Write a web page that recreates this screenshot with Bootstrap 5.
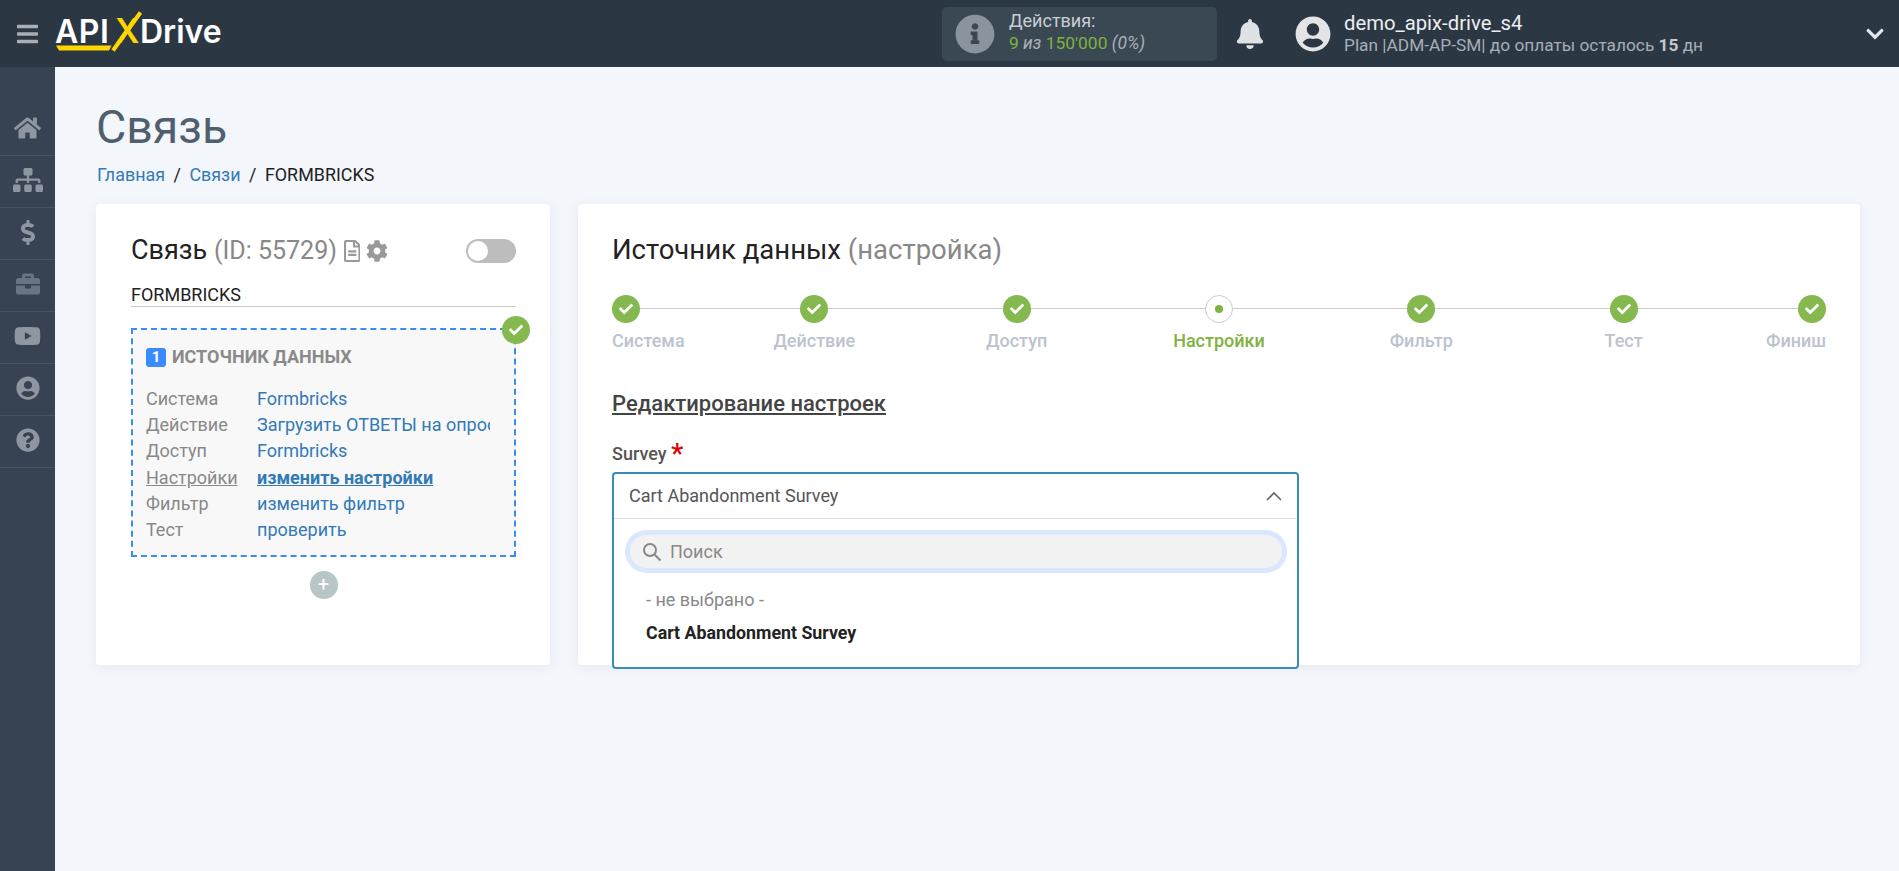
<!DOCTYPE html>
<html lang="ru">
<head>
<meta charset="utf-8">
<title>Связь</title>
<link rel="stylesheet" href="https://cdn.jsdelivr.net/npm/bootstrap@5.3.0/dist/css/bootstrap.min.css">
<style>
html,body{height:100%}
body{font-family:Roboto,"Liberation Sans",sans-serif;background:#f3f6fb;color:#222;font-size:18px;overflow:hidden}
.ax-top{height:67px;background:#2c3744}
.ax-burger{width:21px;height:24px;margin-left:17px;fill:#a9afb5}
.ax-logo{position:relative;margin-left:18px;width:170px;height:40px;font-family:Inter,Roboto,sans-serif;font-weight:600;font-size:32px;line-height:34px;color:#fff}
.ax-logo .ax-api{display:inline-block;width:54px;letter-spacing:.5px;margin-left:-1px}
.ax-logo .ax-x{display:inline-block;color:#ffd600;font-size:34px;margin:0 2px 0 6px;width:23px}
.ax-logo svg{position:absolute;left:0;top:0;width:170px;height:40px;overflow:visible}
.ax-actions{width:275px;height:54px;margin-left:716px;background:#3a4854;border-radius:5px}
.ax-ic-info{width:40px;height:40px;fill:#8a949e;margin-left:13px}
.ax-act{margin-left:14px;padding-bottom:4px}
.ax-act-t{font-size:18px;line-height:22px;color:#c9ced3}
.ax-act-v{font-size:17.4px;line-height:22px;color:#7fb23f}
.ax-act-v i{color:#aab0b6}
.ax-bell{width:28px;height:30px;fill:#dfe2e5;margin-left:19px}
.ax-user{width:36px;height:36px;fill:#e2e4e6;margin-left:31px}
.ax-who{margin-left:13px;padding-bottom:2px}
.ax-uname{font-size:20.3px;line-height:24px;color:#eceef0}
.ax-plan{font-size:17.3px;line-height:20px;color:#a7aeb5}
.ax-plan b{font-weight:700;color:#c4c8cc}
.ax-chev{width:20px;height:20px;fill:#e4e6e8;margin-left:auto;margin-right:14px}
.ax-side{width:55px;background:#374352;padding-top:37px;flex:0 0 55px}
.ax-side-i{height:52px;padding-bottom:3px;border-bottom:1px solid #4a5563;fill:#8e97a1}
.ax-side-i.ax-dim{fill:#687483}
.ax-ic-home{width:27px;height:24px}
.ax-ic-map{width:30px;height:24px}
.ax-ic-usd{width:14px;height:25px}
.ax-ic-round{width:24px;height:24px}
.ax-ic-tube{width:27px;height:24px}
.ax-main{padding:0 39px 0 41px;min-width:0}
.ax-h1{font-size:46.5px;font-weight:400;line-height:54px;color:#4f5f6e;margin:33px 0 0}
.ax-crumbs{font-size:17.9px;line-height:24px;margin:9px 0 17px 1px;color:#222}
.ax-crumbs a,.ax-val a{color:#337ab7;text-decoration:none}
.ax-crumbs span{margin:0 8.5px}
.ax-panel{background:#fff;border-radius:4px;box-shadow:0 2px 12px rgba(60,80,120,.08);height:461px;padding:28px 34px}
.ax-left{flex:0 0 454px;margin-right:28px;padding-left:35px;padding-right:34px}
.ax-ttl{font-size:27.5px;font-weight:400;line-height:36px;color:#222}
.ax-ttl small{font-size:inherit;color:#888}
.ax-left .ax-ttl{font-size:27px}
.ax-left .ax-ttl small{font-size:25px}
.ax-mini{height:22px;fill:#999}
.ax-mini-f{margin-left:7px}
.ax-mini-g{margin-left:6px}
.ax-toggle{width:50px;height:24px;border-radius:12px;background:#bdbdbd;position:relative;margin-left:auto}
.ax-toggle::after{content:"";position:absolute;left:2px;top:2px;width:20px;height:20px;border-radius:50%;background:#fff}
.ax-name{font-size:18px;line-height:22px;margin-top:15px;border-bottom:1px solid #ccc;color:#222}
.ax-box{position:relative;height:229px;margin-top:21px;background:#f8f8f8;border:2px dashed #3b8bf5;padding:17px 14px 0 13px}
.ax-ok{width:28px;height:28px;border-radius:50%;background:#85b84f;position:absolute;display:flex;align-items:center;justify-content:center}
.ax-ok svg{width:14px;height:14px;fill:#fff}
.ax-box>.ax-ok{right:-16px;top:-14px}
.ax-num{display:inline-block;width:20px;height:19px;border-radius:3px;background:#3b8bff;color:#fff;font-weight:700;font-size:15px;line-height:19px;text-align:center;margin-right:6px;vertical-align:1px}
.ax-src{font-size:18px;font-weight:700;color:#8a8a8a;line-height:20px;white-space:nowrap}
.ax-rows{margin-top:19px}
.ax-row{height:26.2px;line-height:26px;font-size:18px;white-space:nowrap}
.ax-lab{flex:0 0 111px;color:#888}
.ax-lab.ax-u{text-decoration:underline}
.ax-val{overflow:hidden;width:233px}
.ax-val a.ax-b{font-weight:700;text-decoration:underline}
.ax-plus{width:28px;height:28px;border-radius:50%;background:#b8c6c7;color:#fff;font-size:20px;line-height:27px;text-align:center;margin:14px auto 0}
.ax-steps{position:relative;margin-top:27px}
.ax-steps::before{content:"";position:absolute;left:14px;right:14px;top:13px;height:1px;background:#ccc}
.ax-step{width:120px;position:relative;text-align:center;font-size:18px;font-weight:500;color:#bcc3cf;white-space:nowrap;line-height:22px}
.ax-step .ax-ok{position:static;margin:0 auto 7px}
.ax-step.ax-first,.ax-step.ax-last{width:60px}
.ax-step.ax-first{text-align:left}
.ax-step.ax-first .ax-ok{margin-left:0}
.ax-step.ax-last{text-align:right;direction:rtl}
.ax-step.ax-last .ax-ok{margin-right:0;margin-left:auto;direction:ltr}
.ax-step.ax-on{color:#7fb23f}
.ax-cur{width:28px;height:28px;border-radius:50%;background:#fff;border:1px solid #ccc;margin:0 auto 7px;display:flex;align-items:center;justify-content:center}
.ax-cur::after{content:"";width:8px;height:8px;border-radius:50%;background:#7fb23f}
.ax-sub{font-size:22px;font-weight:500;line-height:26px;color:#444;text-decoration:underline;margin-top:39px}
.ax-lbl{font-size:18px;font-weight:500;line-height:22px;color:#555;margin-top:26px}
.ax-star{color:#d00;font-size:28px;line-height:10px;vertical-align:-3px;margin-left:0}
.ax-wrap{position:relative;width:687px;height:197px;margin-top:7px}
.ax-drop{position:absolute;inset:0;background:#fff;border:2px solid #3a8cb4;border-radius:4px}
.ax-drop-h{height:45px;padding:0 15px 1px;border-bottom:1px solid #ddd;font-size:18px;color:#555}
.ax-drop-h svg{width:16px;height:10px;margin-left:auto;fill:none;stroke:#666;stroke-width:1.6}
.ax-search{height:33px;margin:16px 15px 0 16px;border-radius:17px;background:#f2f2f2;box-shadow:0 0 0 5px #dbe7fd;padding-left:12px;color:#888;font-size:18px}
.ax-search svg{width:20px;height:20px;fill:none;stroke:#888;stroke-width:2;margin-right:8px}
.ax-opts{margin:16px 0 0 32px;font-size:18px}
.ax-opts div{height:32.700px;line-height:32px}
.ax-o1{color:#888}
.ax-o2{font-weight:700;color:#222;font-size:17.8px}
</style>
</head>
<body class="d-flex flex-column">
<svg width="0" height="0" class="position-absolute">
<defs>
<symbol id="i-check" viewBox="0 0 512 512"><path d="M173.898 439.404l-166.4-166.4c-9.997-9.997-9.997-26.206 0-36.204l36.203-36.204c9.997-9.998 26.207-9.998 36.204 0L192 312.69 432.095 72.596c9.997-9.997 26.207-9.997 36.204 0l36.203 36.204c9.997 9.997 9.997 26.206 0 36.204l-294.4 294.401c-9.998 9.997-26.207 9.997-36.204-.001z"/></symbol>
</defs>
</svg>
<header class="ax-top d-flex align-items-center flex-shrink-0">
  <svg class="ax-burger" viewBox="0 0 448 512"><path d="M16 132h416c8.837 0 16-7.163 16-16V76c0-8.837-7.163-16-16-16H16C7.163 60 0 67.163 0 76v40c0 8.837 7.163 16 16 16zm0 160h416c8.837 0 16-7.163 16-16v-40c0-8.837-7.163-16-16-16H16c-8.837 0-16 7.163-16 16v40c0 8.837 7.163 16 16 16zm0 160h416c8.837 0 16-7.163 16-16v-40c0-8.837-7.163-16-16-16H16c-8.837 0-16 7.163-16 16v40c0 8.837 7.163 16 16 16z"/></svg>
  <div class="ax-logo"><span class="ax-api">API</span><span class="ax-x">X</span>Drive
    <svg viewBox="0 0 170 40"><path d="M0 31.500h55.500l-2.500 5H3z" fill="#ffd600"/><path d="M57 36.500L84.500-1.500" stroke="#ffd600" stroke-width="4" fill="none"/></svg>
  </div>
  <div class="ax-actions d-flex align-items-center">
    <svg class="ax-ic-info" viewBox="0 0 512 512"><path d="M256 8C119.043 8 8 119.083 8 256c0 136.997 111.043 248 248 248s248-111.003 248-248C504 119.083 392.957 8 256 8zm0 110c23.196 0 42 18.804 42 42s-18.804 42-42 42-42-18.804-42-42 18.804-42 42-42zm56 254c0 6.627-5.373 12-12 12h-88c-6.627 0-12-5.373-12-12v-24c0-6.627 5.373-12 12-12h12v-64h-12c-6.627 0-12-5.373-12-12v-24c0-6.627 5.373-12 12-12h64c6.627 0 12 5.373 12 12v100h12c6.627 0 12 5.373 12 12v24z"/></svg>
    <div class="ax-act">
      <div class="ax-act-t">Действия:</div>
      <div class="ax-act-v">9 <i>из</i> 150'000 <i>(0%)</i></div>
    </div>
  </div>
  <svg class="ax-bell" viewBox="0 0 448 512"><path d="M224 512c35.32 0 63.97-28.65 63.97-64H160.03c0 35.35 28.65 64 63.97 64zm215.39-149.71c-19.32-20.76-55.47-51.99-55.47-154.29 0-77.7-54.48-139.9-127.94-155.16V32c0-17.67-14.32-32-31.98-32s-31.98 14.33-31.98 32v20.84C118.56 68.1 64.08 130.3 64.08 208c0 102.3-36.15 133.53-55.47 154.29-6 6.45-8.66 14.16-8.61 21.71.11 16.4 12.98 32 32.1 32h383.8c19.12 0 32-15.6 32.1-32 .05-7.55-2.61-15.27-8.61-21.71z"/></svg>
  <svg class="ax-user" viewBox="0 0 496 512"><path d="M248 8C111 8 0 119 0 256s111 248 248 248 248-111 248-248S385 8 248 8zm0 96c48.6 0 88 39.4 88 88s-39.4 88-88 88-88-39.4-88-88 39.4-88 88-88zm0 344c-58.7 0-111.300-26.600-146.500-68.200 18.800-35.400 55.600-59.800 98.500-59.800 2.400 0 4.800.4 7.100 1.100 13 4.200 26.600 6.900 40.900 6.900 14.300 0 28-2.700 40.900-6.900 2.300-.7 4.700-1.100 7.100-1.100 42.900 0 79.700 24.400 98.500 59.800C359.300 421.400 306.700 448 248 448z"/></svg>
  <div class="ax-who">
    <div class="ax-uname">demo_apix-drive_s4</div>
    <div class="ax-plan">Plan |ADM-AP-SM| до оплаты осталось <b>15</b> дн</div>
  </div>
  <svg class="ax-chev" viewBox="0 0 448 512"><path d="M207.029 381.476L12.686 187.132c-9.373-9.373-9.373-24.569 0-33.941l22.667-22.667c9.357-9.357 24.522-9.375 33.901-.04L224 284.505l154.745-154.021c9.379-9.335 24.544-9.317 33.901.04l22.667 22.667c9.373 9.373 9.373 24.569 0 33.941L240.971 381.476c-9.373 9.372-24.569 9.372-33.942 0z"/></svg>
</header>
<div class="d-flex flex-grow-1" style="min-height:0">
  <nav class="ax-side">
    <div class="ax-side-i d-flex align-items-center justify-content-center"><svg class="ax-ic-home" viewBox="0 0 576 512"><path d="M280.37 148.26L96 300.11V464a16 16 0 0 0 16 16l112.060-.29a16 16 0 0 0 15.920-16V368a16 16 0 0 1 16-16h64a16 16 0 0 1 16 16v95.640a16 16 0 0 0 16 16.050L464 480a16 16 0 0 0 16-16V300L295.670 148.260a12.190 12.190 0 0 0-15.300 0zM571.600 251.470L488 182.560V44.050a12 12 0 0 0-12-12h-56a12 12 0 0 0-12 12v72.610L318.470 43a48 48 0 0 0-61 0L4.340 251.470a12 12 0 0 0-1.600 16.900l25.500 31A12 12 0 0 0 45.150 301l235.220-193.740a12.190 12.190 0 0 1 15.300 0L530.900 301a12 12 0 0 0 16.900-1.600l25.500-31a12 12 0 0 0-1.700-16.930z"/></svg></div>
    <div class="ax-side-i d-flex align-items-center justify-content-center"><svg class="ax-ic-map" viewBox="0 0 640 512"><path d="M128 352H32c-17.670 0-32 14.330-32 32v96c0 17.670 14.330 32 32 32h96c17.670 0 32-14.330 32-32v-96c0-17.670-14.330-32-32-32zm-24-80h192v48h48v-48h192v48h48v-57.590c0-21.170-17.230-38.410-38.410-38.410H344v-64h40c17.670 0 32-14.330 32-32V32c0-17.670-14.330-32-32-32H256c-17.670 0-32 14.330-32 32v96c0 17.670 14.330 32 32 32h40v64H94.410C73.230 224 56 241.230 56 262.410V320h48v-48zm264 80h-96c-17.670 0-32 14.330-32 32v96c0 17.670 14.330 32 32 32h96c17.670 0 32-14.330 32-32v-96c0-17.670-14.330-32-32-32zm240 0h-96c-17.670 0-32 14.330-32 32v96c0 17.670 14.330 32 32 32h96c17.670 0 32-14.330 32-32v-96c0-17.670-14.330-32-32-32z"/></svg></div>
    <div class="ax-side-i d-flex align-items-center justify-content-center"><svg class="ax-ic-usd" viewBox="0 0 288 512"><path d="M209.200 233.400l-108-31.600C88.700 198.200 80 186.500 80 173.500c0-16.300 13.200-29.500 29.500-29.500h66.300c12.200 0 24.200 3.700 34.200 10.500 6.100 4.100 14.300 3.100 19.500-2l34.800-34c7.100-6.900 6.100-18.400-1.800-24.500C238 74.800 207.400 64.100 176 64V16c0-8.800-7.200-16-16-16h-32c-8.800 0-16 7.200-16 16v48h-2.500C45.800 64-5.400 118.700.5 183.600c4.200 46.100 39.400 83.600 83.800 96.600l102.500 30c12.500 3.700 21.200 15.300 21.200 28.300 0 16.300-13.200 29.500-29.500 29.500h-66.300C100 368 88 364.300 78 357.500c-6.100-4.100-14.300-3.100-19.500 2l-34.800 34c-7.100 6.900-6.100 18.400 1.800 24.500 24.500 19.200 55.100 29.900 86.500 30v48c0 8.800 7.200 16 16 16h32c8.800 0 16-7.200 16-16v-48.200c46.600-.9 90.300-28.600 105.700-72.700 21.500-61.600-14.600-124.800-72.500-141.700z"/></svg></div>
    <div class="ax-side-i ax-dim d-flex align-items-center justify-content-center"><svg class="ax-ic-round" viewBox="0 0 512 512"><path d="M320 336c0 8.840-7.160 16-16 16h-96c-8.840 0-16-7.160-16-16v-48H0v144c0 25.600 22.400 48 48 48h416c25.600 0 48-22.400 48-48V288H320v48zm144-208h-80V80c0-25.600-22.400-48-48-48H176c-25.600 0-48 22.400-48 48v48H48c-25.600 0-48 22.400-48 48v80h512v-80c0-25.600-22.400-48-48-48zm-144 0H192V96h128v32z"/></svg></div>
    <div class="ax-side-i d-flex align-items-center justify-content-center"><svg class="ax-ic-tube" viewBox="0 0 576 512"><path d="M549.655 124.083c-6.281-23.650-24.787-42.276-48.284-48.597C458.781 64 288 64 288 64S117.220 64 74.629 75.486c-23.497 6.322-42.003 24.947-48.284 48.597-11.412 42.867-11.412 132.305-11.412 132.305s0 89.438 11.412 132.305c6.281 23.650 24.787 41.500 48.284 47.821C117.220 448 288 448 288 448s170.780 0 213.371-11.486c23.497-6.321 42.003-24.171 48.284-47.821 11.412-42.867 11.412-132.305 11.412-132.305s0-89.438-11.412-132.305zm-317.510 213.508V175.185l142.739 81.205-142.739 81.201z"/></svg></div>
    <div class="ax-side-i d-flex align-items-center justify-content-center"><svg class="ax-ic-round" viewBox="0 0 496 512"><path d="M248 8C111 8 0 119 0 256s111 248 248 248 248-111 248-248S385 8 248 8zm0 96c48.600 0 88 39.400 88 88s-39.400 88-88 88-88-39.400-88-88 39.400-88 88-88zm0 344c-58.700 0-111.300-26.600-146.500-68.200 18.800-35.400 55.600-59.800 98.500-59.800 2.400 0 4.800.4 7.100 1.100 13 4.200 26.600 6.900 40.900 6.900 14.300 0 28-2.700 40.900-6.900 2.300-.7 4.700-1.100 7.100-1.100 42.900 0 79.700 24.400 98.500 59.800C359.300 421.400 306.700 448 248 448z"/></svg></div>
    <div class="ax-side-i d-flex align-items-center justify-content-center"><svg class="ax-ic-round" viewBox="0 0 512 512"><path d="M504 256c0 136.997-111.043 248-248 248S8 392.997 8 256C8 119.083 119.043 8 256 8s248 111.083 248 248zM262.655 90c-54.497 0-89.255 22.957-116.549 63.758-3.536 5.286-2.353 12.415 2.715 16.258l34.699 26.310c5.205 3.947 12.621 3.008 16.665-2.122 17.864-22.658 30.113-35.797 57.303-35.797 20.429 0 45.698 13.148 45.698 32.958 0 14.976-12.363 22.667-32.534 33.976C247.128 238.528 216 254.941 216 296v4c0 6.627 5.373 12 12 12h56c6.627 0 12-5.373 12-12v-1.333c0-28.462 83.186-29.647 83.186-106.667 0-58.002-60.165-102-116.531-102zM256 338c-25.365 0-46 20.635-46 46 0 25.364 20.635 46 46 46s46-20.636 46-46c0-25.365-20.635-46-46-46z"/></svg></div>
  </nav>
  <main class="ax-main flex-grow-1">
    <h1 class="ax-h1">Связь</h1>
    <div class="ax-crumbs"><a href="#">Главная</a><span>/</span><a href="#">Связи</a><span>/</span>FORMBRICKS</div>
    <div class="d-flex">
      <section class="ax-panel ax-left">
        <div class="d-flex align-items-center">
          <div class="ax-ttl">Связь <small>(ID: 55729)</small></div>
          <svg class="ax-mini ax-mini-f" viewBox="0 0 384 512"><path d="M288 248v28c0 6.600-5.400 12-12 12H108c-6.600 0-12-5.400-12-12v-28c0-6.600 5.400-12 12-12h168c6.600 0 12 5.400 12 12zm-12 72H108c-6.600 0-12 5.400-12 12v28c0 6.600 5.400 12 12 12h168c6.600 0 12-5.400 12-12v-28c0-6.600-5.400-12-12-12zm108-188.100V464c0 26.500-21.500 48-48 48H48c-26.500 0-48-21.500-48-48V48C0 21.500 21.500 0 48 0h204.100C264.800 0 277 5.100 286 14.100L369.900 98c9 8.900 14.100 21.200 14.100 33.900zm-128-80V128h76.100L256 51.900zM336 464V176H232c-13.300 0-24-10.700-24-24V48H48v416h288z"/></svg>
          <svg class="ax-mini ax-mini-g" viewBox="0 0 512 512"><path d="M487.400 315.700l-42.600-24.600c4.300-23.200 4.300-47 0-70.200l42.600-24.600c4.900-2.800 7.100-8.600 5.500-14-11.100-35.600-30-67.800-54.700-94.600-3.800-4.100-10-5.100-14.800-2.300L380.800 110c-17.900-15.400-38.500-27.300-60.800-35.100V25.800c0-5.600-3.900-10.500-9.400-11.700-36.700-8.200-74.300-7.800-109.200 0-5.500 1.200-9.400 6.100-9.400 11.700V75c-22.200 7.900-42.800 19.800-60.800 35.100L88.700 85.500c-4.900-2.800-11-1.900-14.800 2.300-24.700 26.700-43.600 58.900-54.700 94.600-1.700 5.400.6 11.200 5.500 14L67.300 221c-4.300 23.200-4.300 47 0 70.200l-42.600 24.600c-4.900 2.800-7.100 8.600-5.500 14 11.100 35.600 30 67.800 54.700 94.600 3.800 4.100 10 5.100 14.800 2.300l42.600-24.600c17.900 15.400 38.500 27.300 60.800 35.100v49.200c0 5.600 3.900 10.500 9.400 11.700 36.700 8.200 74.300 7.800 109.200 0 5.500-1.200 9.400-6.100 9.400-11.700v-49.200c22.200-7.900 42.800-19.800 60.800-35.100l42.600 24.600c4.900 2.800 11 1.900 14.800-2.300 24.700-26.700 43.600-58.900 54.700-94.600 1.500-5.500-.7-11.300-5.600-14.100zM256 336c-44.100 0-80-35.900-80-80s35.900-80 80-80 80 35.900 80 80-35.900 80-80 80z"/></svg>
          <div class="ax-toggle"></div>
        </div>
        <div class="ax-name">FORMBRICKS</div>
        <div class="ax-box">
          <span class="ax-ok"><svg><use href="#i-check"/></svg></span>
          <div class="ax-src"><span class="ax-num">1</span>ИСТОЧНИК ДАННЫХ</div>
          <div class="ax-rows">
            <div class="ax-row d-flex"><div class="ax-lab">Система</div><div class="ax-val"><a href="#">Formbricks</a></div></div>
            <div class="ax-row d-flex"><div class="ax-lab">Действие</div><div class="ax-val"><a href="#">Загрузить ОТВЕТЫ на опрос</a></div></div>
            <div class="ax-row d-flex"><div class="ax-lab">Доступ</div><div class="ax-val"><a href="#">Formbricks</a></div></div>
            <div class="ax-row d-flex"><div class="ax-lab ax-u">Настройки</div><div class="ax-val"><a class="ax-b" href="#">изменить настройки</a></div></div>
            <div class="ax-row d-flex"><div class="ax-lab">Фильтр</div><div class="ax-val"><a href="#">изменить фильтр</a></div></div>
            <div class="ax-row d-flex"><div class="ax-lab">Тест</div><div class="ax-val"><a href="#">проверить</a></div></div>
          </div>
        </div>
        <div class="ax-plus">+</div>
      </section>
      <section class="ax-panel flex-grow-1">
        <div class="ax-ttl">Источник данных <small>(настройка)</small></div>
        <div class="ax-steps d-flex justify-content-between">
          <div class="ax-step ax-first"><span class="ax-ok"><svg><use href="#i-check"/></svg></span>Система</div>
          <div class="ax-step"><span class="ax-ok"><svg><use href="#i-check"/></svg></span>Действие</div>
          <div class="ax-step"><span class="ax-ok"><svg><use href="#i-check"/></svg></span>Доступ</div>
          <div class="ax-step ax-on"><div class="ax-cur"></div>Настройки</div>
          <div class="ax-step"><span class="ax-ok"><svg><use href="#i-check"/></svg></span>Фильтр</div>
          <div class="ax-step"><span class="ax-ok"><svg><use href="#i-check"/></svg></span>Тест</div>
          <div class="ax-step ax-last"><span class="ax-ok"><svg><use href="#i-check"/></svg></span>Финиш</div>
        </div>
        <div class="ax-sub">Редактирование настроек</div>
        <div class="ax-lbl">Survey <span class="ax-star">*</span></div>
        <div class="ax-wrap">
          <div class="ax-drop">
            <div class="ax-drop-h d-flex align-items-center">Cart Abandonment Survey<svg viewBox="0 0 16 10"><path d="M1 9l7-7 7 7"/></svg></div>
            <div class="ax-search d-flex align-items-center"><svg viewBox="0 0 20 20"><circle cx="8" cy="8" r="6"/><path d="M12.500 12.500l6 6"/></svg>Поиск</div>
            <div class="ax-opts"><div class="ax-o1">- не выбрано -</div><div class="ax-o2">Cart Abandonment Survey</div></div>
          </div>
        </div>
      </section>
    </div>
  </main>
</div>
</body>
</html>
